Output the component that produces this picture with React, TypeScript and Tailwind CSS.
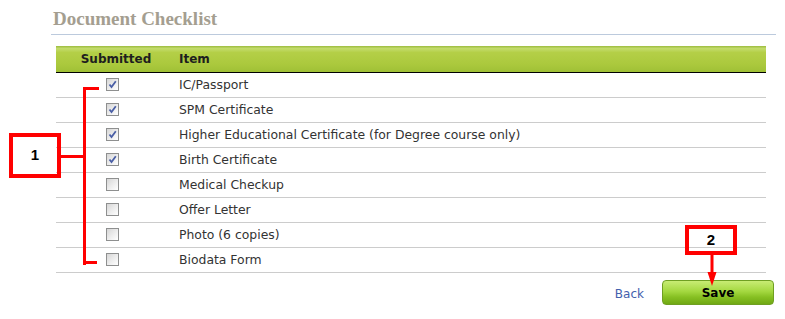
import React from "react";

const items: { label: string; checked: boolean }[] = [
  { label: "IC/Passport", checked: true },
  { label: "SPM Certificate", checked: true },
  { label: "Higher Educational Certificate (for Degree course only)", checked: true },
  { label: "Birth Certificate", checked: true },
  { label: "Medical Checkup", checked: false },
  { label: "Offer Letter", checked: false },
  { label: "Photo (6 copies)", checked: false },
  { label: "Biodata Form", checked: false },
];

function Box({ checked }: { checked: boolean }) {
  return (
    <div className="w-[13px] h-[13px] border border-[#8e8f8f] bg-[linear-gradient(135deg,#d6d6d6_0%,#f0f0f0_60%,#ffffff_100%)] flex items-center justify-center">
      {checked && (
        <svg width="9" height="9" viewBox="0 0 9 9">
          <path d="M1.5 4.5 L3.5 7 L7.8 1.2" fill="none" stroke="#4a5fa6" strokeWidth="1.8" />
        </svg>
      )}
    </div>
  );
}

export default function App() {
  return (
    <div className="relative w-[785px] h-[319px] bg-white overflow-hidden font-['DejaVu_Sans',Verdana,sans-serif]">
      <div className="ml-[51px] mr-[9px] pt-[7px] pb-[3px] border-b border-[#bccadd]">
        <h1 className="ml-[2px] text-[19px] leading-[24px] font-bold text-[#a49e90] font-['Liberation_Serif',Georgia,serif]">
          Document Checklist
        </h1>
      </div>

      <div className="ml-[56px] w-[710px] mt-[11px]">
        <div className="flex h-[27px] border-b border-black bg-[linear-gradient(180deg,#9cbb3e_0%,#c3dc6c_10%,#b4cf47_25%,#abc93d_70%,#9fc036_100%)] text-[12px] font-bold text-[#1e1e1e]">
          <div className="w-[115px] flex items-center justify-center pl-[5px]">Submitted</div>
          <div className="flex items-center pl-[8px]">Item</div>
        </div>
        {items.map((it) => (
          <div key={it.label} className="flex h-[25px] border-b border-[#cccccc] text-[12.4px] text-[#333333]">
            <div className="w-[115px] flex items-center justify-center pr-[3px] pb-[2px]">
              <Box checked={it.checked} />
            </div>
            <div className="flex items-center pl-[8px]">{it.label}</div>
          </div>
        ))}
      </div>

      <div className="w-[774px] flex justify-end items-center gap-[18px] mt-[7px]">
        <a className="text-[12px] text-[#4360ad] mt-[2px] cursor-pointer">Back</a>
        <button className="w-[112px] h-[25px] rounded-[4px] border border-[#6f9f22] bg-[linear-gradient(180deg,#c8ec74_0%,#a4d840_45%,#86c022_70%,#70a814_100%)] text-[12px] font-bold text-black">
          Save
        </button>
      </div>

      {/* Annotation 1 */}
      <div className="absolute left-[9px] top-[133px] w-[52px] h-[45px] border-4 border-[#ff0000] flex items-center justify-center text-[15px] font-bold text-black font-['Liberation_Sans',Arial,sans-serif]">
        1
      </div>
      <div className="absolute left-[61px] top-[155px] w-[22px] h-[3px] bg-[#ff0000]" />
      <div className="absolute left-[83px] top-[87px] w-[3px] h-[178px] bg-[#ff0000]" />
      <div className="absolute left-[83px] top-[87px] w-[16px] h-[3px] bg-[#ff0000]" />
      <div className="absolute left-[83px] top-[261px] w-[14px] h-[3px] bg-[#ff0000]" />

      {/* Annotation 2 */}
      <div className="absolute left-[685px] top-[225px] w-[52px] h-[30px] border-4 border-[#ff0000] flex items-center justify-center text-[15px] font-bold text-black font-['Liberation_Sans',Arial,sans-serif]">
        2
      </div>
      <svg className="absolute left-[702px] top-[255px]" width="20" height="32" viewBox="0 0 20 32">
        <rect x="8.5" y="0" width="3" height="20" fill="#ff0000" />
        <polygon points="5.5,17 14.5,17 10,31" fill="#ff0000" />
      </svg>
    </div>
  );
}
